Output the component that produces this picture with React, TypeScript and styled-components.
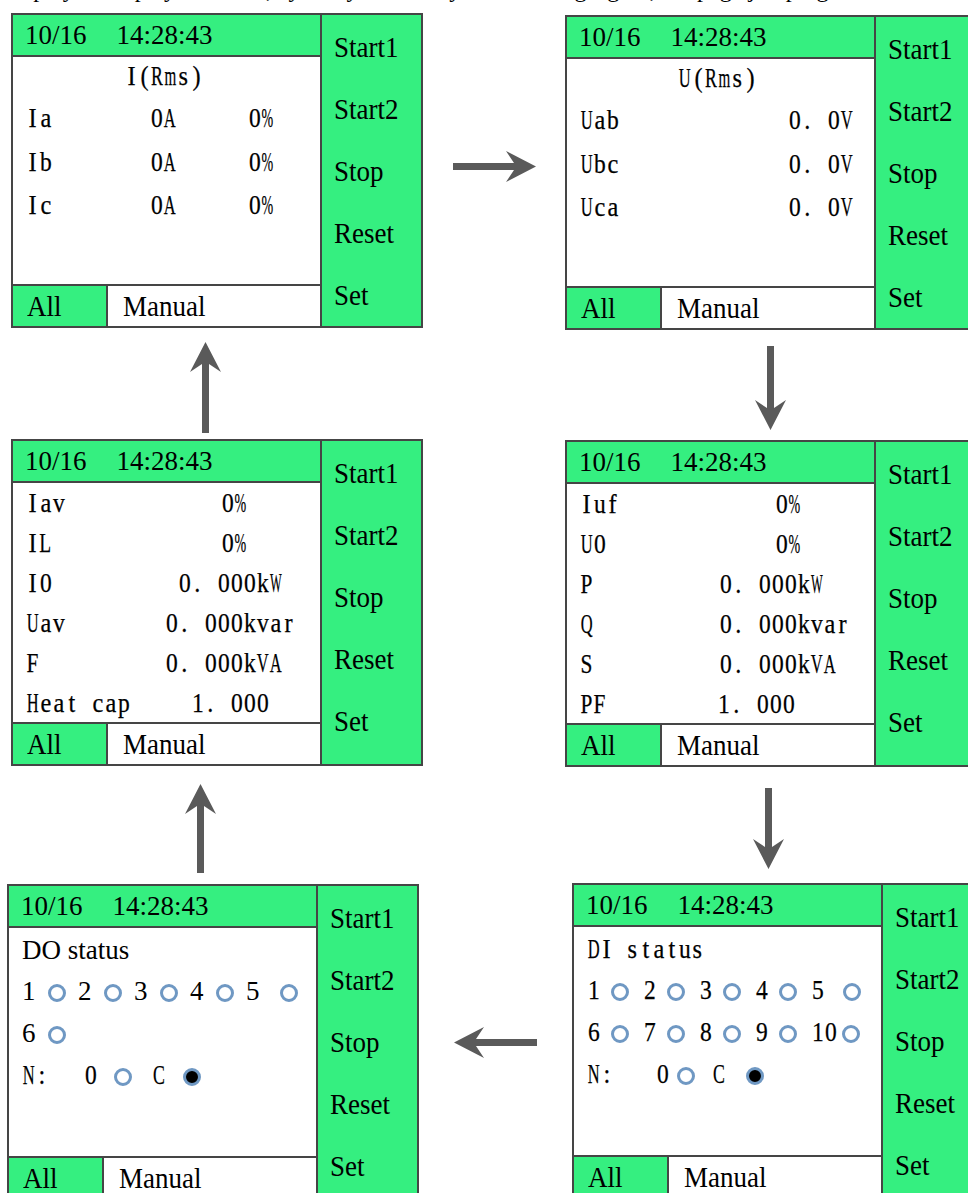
import React from "react";
import styled, { createGlobalStyle } from "styled-components";

const GREEN = "#35ef80";
const LINE = "#454545";
const RING = "#6f98c3";
const ARROW = "#5a5a5a";

const SERIF = `"Liberation Serif", "Times New Roman", serif`;

const GlobalStyle = createGlobalStyle`
  html, body { margin: 0; padding: 0; background: #ffffff; }
  body { font-family: ${SERIF}; color: #000; }
`;

const Page = styled.div`
  width: 968px;
  height: 1193px;
  overflow: hidden;
`;

const Caption = styled.div`
  height: 13px;
  overflow: hidden;
  font-size: 24px;
  line-height: 24px;
  white-space: pre;

  span {
    display: block;
    margin-top: -23px;
  }
`;

const PanelRow = styled.div<{ $left: number }>`
  display: flex;
  align-items: flex-start;
  padding-left: ${(p) => p.$left}px;
`;

const ArrowCell = styled.div<{ $w: number; $pt?: number; $pb?: number }>`
  width: ${(p) => p.$w}px;
  height: 315px;
  flex-shrink: 0;
  box-sizing: border-box;
  padding: ${(p) => p.$pt ?? 0}px 0 ${(p) => p.$pb ?? 0}px;
  display: flex;
  align-items: center;
  justify-content: center;
`;

const ArrowRow = styled.div<{ $h: number; $left: number; $gap: number }>`
  height: ${(p) => p.$h}px;
  box-sizing: border-box;
  padding: 6px 0 0 ${(p) => p.$left}px;
  display: flex;
  align-items: center;
  gap: ${(p) => p.$gap}px;
`;

const Panel = styled.div<{ $dy?: number }>`
  width: 412px;
  flex-shrink: 0;
  box-sizing: border-box;
  margin-top: ${(p) => p.$dy ?? 0}px;
  border: 2px solid ${LINE};
  display: flex;
  background: #fff;
`;

const Main = styled.div`
  width: 307px;
  display: flex;
  flex-direction: column;
`;

const Header = styled.div`
  height: 42px;
  box-sizing: border-box;
  border-bottom: 2px solid ${LINE};
  background: ${GREEN};
  display: flex;
  align-items: center;
  gap: 30px;
  padding-left: 12px;
  font-size: 27px;
`;

const Body = styled.div<{ $h: number }>`
  height: ${(p) => p.$h}px;
  box-sizing: border-box;
`;

const Footer = styled.div`
  height: 42px;
  box-sizing: border-box;
  border-top: 2px solid ${LINE};
  display: flex;
`;

const ModeCell = styled.div<{ $on?: boolean }>`
  box-sizing: border-box;
  flex: ${(p) => (p.$on ? "0 0 95px" : "1")};
  border-right: ${(p) => (p.$on ? `2px solid ${LINE}` : "none")};
  background: ${(p) => (p.$on ? GREEN : "#fff")};
  padding-left: ${(p) => (p.$on ? 14 : 15)}px;
  display: flex;
  align-items: center;
  font-size: 27px;

  span {
    display: inline-block;
    transform: scaleY(1.08);
  }
`;

const Side = styled.div`
  flex: 1;
  box-sizing: border-box;
  border-left: 2px solid ${LINE};
  background: ${GREEN};
  padding: 1px 0 0 12px;
  display: flex;
  flex-direction: column;
`;

const SideKey = styled.div`
  height: 62px;
  display: flex;
  align-items: center;
  font-size: 27px;

  span {
    display: inline-block;
    transform: scaleY(1.12);
  }
`;

/* LCD text: each character sits in a fixed 13px cell, its glyph condensed to fit */
const ADVANCE: Record<string, number> = {
  ".": 0.25, ":": 0.278, "%": 0.833, "(": 0.333, ")": 0.333, " ": 0.25,
  A: 0.722, C: 0.667, D: 0.722, F: 0.556, H: 0.722, I: 0.333, L: 0.611,
  N: 0.722, P: 0.556, Q: 0.722, R: 0.667, S: 0.556, U: 0.722, V: 0.722, W: 0.944,
  a: 0.444, b: 0.5, c: 0.444, e: 0.444, f: 0.333, k: 0.5, m: 0.778, p: 0.5,
  r: 0.333, s: 0.389, t: 0.278, u: 0.5, v: 0.5,
};

const Glyph = styled.span`
  display: inline-flex;
  justify-content: center;
  width: 13px;
  flex-shrink: 0;
`;

const Ink = styled.span<{ $sx: number }>`
  display: inline-block;
  transform: scaleX(${(p) => p.$sx});
  -webkit-text-stroke: 0.25px #000;
`;

const LcdText = ({ text }: { text: string }) => (
  <>
    {[...text].map((ch, i) => {
      const adv = (ADVANCE[ch] ?? 0.5) * 27;
      const sx = Math.min(0.9, 11.8 / adv);
      return (
        <Glyph key={i}>
          <Ink $sx={Number(sx.toFixed(2))}>{ch === " " ? "\u00a0" : ch}</Ink>
        </Glyph>
      );
    })}
  </>
);

const Title = styled.div`
  height: 38px;
  margin-bottom: 2px;
  padding-right: 6px;
  display: flex;
  align-items: center;
  justify-content: center;
  font-size: 27px;
`;

const DataRow = styled.div<{ $cols: string; $h: number }>`
  height: ${(p) => p.$h}px;
  padding-left: 13px;
  display: grid;
  grid-template-columns: ${(p) => p.$cols};
  align-items: center;
  font-size: 27px;
  white-space: nowrap;

  & > span {
    display: flex;
  }
`;

const StatusBody = styled.div`
  padding: 2px 0 0 13px;
`;

const StatusTitle = styled.div`
  height: 40px;
  display: flex;
  align-items: center;
  font-size: 27px;
`;

const StatusRow = styled.div`
  height: 42px;
  display: flex;
  align-items: center;
`;

const Cell = styled.div`
  width: 56px;
  flex-shrink: 0;
  display: flex;
  align-items: center;
`;

const Txt = styled.span<{ $w?: number; $ml?: number }>`
  display: inline-flex;
  flex-shrink: 0;
  width: ${(p) => (p.$w ? `${p.$w}px` : "auto")};
  margin-left: ${(p) => p.$ml ?? 0}px;
  font-size: 27px;
  white-space: pre;
`;

const Lamp = styled.span<{ $on?: boolean; $ml?: number }>`
  width: 18px;
  height: 18px;
  flex-shrink: 0;
  box-sizing: border-box;
  margin-left: ${(p) => p.$ml ?? 0}px;
  border-radius: 50%;
  border: 3px solid ${RING};
  background: ${(p) => (p.$on ? "#000" : "transparent")};
  transform: translateY(2px);
`;

type Dir = "up" | "down" | "left" | "right";

const Arrow = ({ dir, length }: { dir: Dir; length: number }) => {
  const L = length;
  const base: [number, number][] = [
    [0, 12],
    [L - 22, 12],
    [L - 30, 0],
    [L, 15.5],
    [L - 30, 31],
    [L - 22, 19],
    [0, 19],
  ];
  const map = ([a, c]: [number, number]) => {
    if (dir === "right") return [a, c];
    if (dir === "left") return [L - a, c];
    if (dir === "down") return [c, a];
    return [c, L - a];
  };
  const flat = dir === "left" || dir === "right";
  const w = flat ? L : 31;
  const h = flat ? 31 : L;
  return (
    <svg width={w} height={h} viewBox={`0 0 ${w} ${h}`}>
      <polygon points={base.map((pt) => map(pt).join(",")).join(" ")} fill={ARROW} />
    </svg>
  );
};

const Screen = ({
  bodyHeight,
  dy,
  children,
}: {
  bodyHeight: number;
  dy?: number;
  children: React.ReactNode;
}) => (
  <Panel $dy={dy}>
    <Main>
      <Header>
        <span>10/16</span>
        <span>14:28:43</span>
      </Header>
      <Body $h={bodyHeight}>{children}</Body>
      <Footer>
        <ModeCell $on>
          <span>All</span>
        </ModeCell>
        <ModeCell>
          <span>Manual</span>
        </ModeCell>
      </Footer>
    </Main>
    <Side>
      {["Start1", "Start2", "Stop", "Reset", "Set"].map((k) => (
        <SideKey key={k}>
          <span>{k}</span>
        </SideKey>
      ))}
    </Side>
  </Panel>
);

const currentRows = [
  ["Ia", "0A", "0%"],
  ["Ib", "0A", "0%"],
  ["Ic", "0A", "0%"],
];

const voltageRows = [
  ["Uab", "0. 0V"],
  ["Ubc", "0. 0V"],
  ["Uca", "0. 0V"],
];

const leftRows: [string, string, number][] = [
  ["Iav", "0%", 195],
  ["IL", "0%", 195],
  ["I0", "0. 000kW", 152],
  ["Uav", "0. 000kvar", 139],
  ["F", "0. 000kVA", 139],
  ["Heat cap", "1. 000", 165],
];

const rightRows: [string, string, number][] = [
  ["Iuf", "0%", 195],
  ["U0", "0%", 195],
  ["P", "0. 000kW", 139],
  ["Q", "0. 000kvar", 139],
  ["S", "0. 000kVA", 139],
  ["PF", "1. 000", 137],
];

const doCells: [string, number][] = [
  ["1", 12],
  ["2", 12],
  ["3", 12],
  ["4", 12],
  ["5", 20],
];

const diRow1: [string, number][] = [
  ["1", 11],
  ["2", 11],
  ["3", 11],
  ["4", 11],
  ["5", 19],
];

const diRow2: [string, number][] = [
  ["6", 11],
  ["7", 11],
  ["8", 11],
  ["9", 11],
  ["10", 5],
];

export default function App() {
  return (
    <Page>
      <GlobalStyle />
      <Caption>
        <span>{"Display of display interface, cycle by arrow key as following figure, the page jumping"}</span>
      </Caption>

      <PanelRow $left={11}>
        <Screen bodyHeight={227}>
          <Title>
            <LcdText text="I(Rms)" />
          </Title>
          {currentRows.map(([a, b, c]) => (
            <DataRow key={a} $cols="124px 98px auto" $h={43.5}>
              <span>
                <LcdText text={a} />
              </span>
              <span>
                <LcdText text={b} />
              </span>
              <span>
                <LcdText text={c} />
              </span>
            </DataRow>
          ))}
        </Screen>
        <ArrowCell $w={142} $pb={9}>
          <Arrow dir="right" length={83} />
        </ArrowCell>
        <Screen bodyHeight={227} dy={2}>
          <Title>
            <LcdText text="U(Rms)" />
          </Title>
          {voltageRows.map(([a, b]) => (
            <DataRow key={a} $cols="208px auto" $h={43.5}>
              <span>
                <LcdText text={a} />
              </span>
              <span>
                <LcdText text={b} />
              </span>
            </DataRow>
          ))}
        </Screen>
      </PanelRow>

      <ArrowRow $h={109} $left={190} $gap={534}>
        <Arrow dir="up" length={91} />
        <Arrow dir="down" length={84} />
      </ArrowRow>

      <PanelRow $left={11}>
        <Screen bodyHeight={239}>
          {leftRows.map(([a, b, at]) => (
            <DataRow key={a} $cols={`${at}px auto`} $h={40}>
              <span>
                <LcdText text={a} />
              </span>
              <span>
                <LcdText text={b} />
              </span>
            </DataRow>
          ))}
        </Screen>
        <ArrowCell $w={142} />
        <Screen bodyHeight={239} dy={1}>
          {rightRows.map(([a, b, at]) => (
            <DataRow key={a} $cols={`${at}px auto`} $h={40}>
              <span>
                <LcdText text={a} />
              </span>
              <span>
                <LcdText text={b} />
              </span>
            </DataRow>
          ))}
        </Screen>
      </PanelRow>

      <ArrowRow $h={116} $left={185} $gap={537}>
        <Arrow dir="up" length={89} />
        <Arrow dir="down" length={81} />
      </ArrowRow>

      <PanelRow $left={7}>
        <Screen bodyHeight={228} dy={1}>
          <StatusBody>
            <StatusTitle>DO status</StatusTitle>
            <StatusRow>
              {doCells.map(([n, ml]) => (
                <Cell key={n}>
                  <Txt>{n}</Txt>
                  <Lamp $ml={ml} />
                </Cell>
              ))}
            </StatusRow>
            <StatusRow>
              <Cell>
                <Txt>6</Txt>
                <Lamp $ml={12} />
              </Cell>
            </StatusRow>
            <StatusRow>
              <Txt $w={62}>
                <LcdText text="N:" />
              </Txt>
              <Txt $w={30}>
                <LcdText text="0" />
              </Txt>
              <Lamp />
              <Txt $w={31} $ml={20}>
                <LcdText text="C" />
              </Txt>
              <Lamp $on />
            </StatusRow>
          </StatusBody>
        </Screen>
        <ArrowCell $w={153} $pt={3}>
          <Arrow dir="left" length={83} />
        </ArrowCell>
        <Screen bodyHeight={228}>
          <StatusBody>
            <StatusTitle>
              <LcdText text="DI status" />
            </StatusTitle>
            <StatusRow>
              {diRow1.map(([n, ml]) => (
                <Cell key={n}>
                  <Txt>
                    <LcdText text={n} />
                  </Txt>
                  <Lamp $ml={ml} />
                </Cell>
              ))}
            </StatusRow>
            <StatusRow>
              {diRow2.map(([n, ml]) => (
                <Cell key={n}>
                  <Txt>
                    <LcdText text={n} />
                  </Txt>
                  <Lamp $ml={ml} />
                </Cell>
              ))}
            </StatusRow>
            <StatusRow>
              <Txt $w={69}>
                <LcdText text="N:" />
              </Txt>
              <Txt $w={21}>
                <LcdText text="0" />
              </Txt>
              <Lamp />
              <Txt $w={34} $ml={17}>
                <LcdText text="C" />
              </Txt>
              <Lamp $on />
            </StatusRow>
          </StatusBody>
        </Screen>
      </PanelRow>
    </Page>
  );
}
